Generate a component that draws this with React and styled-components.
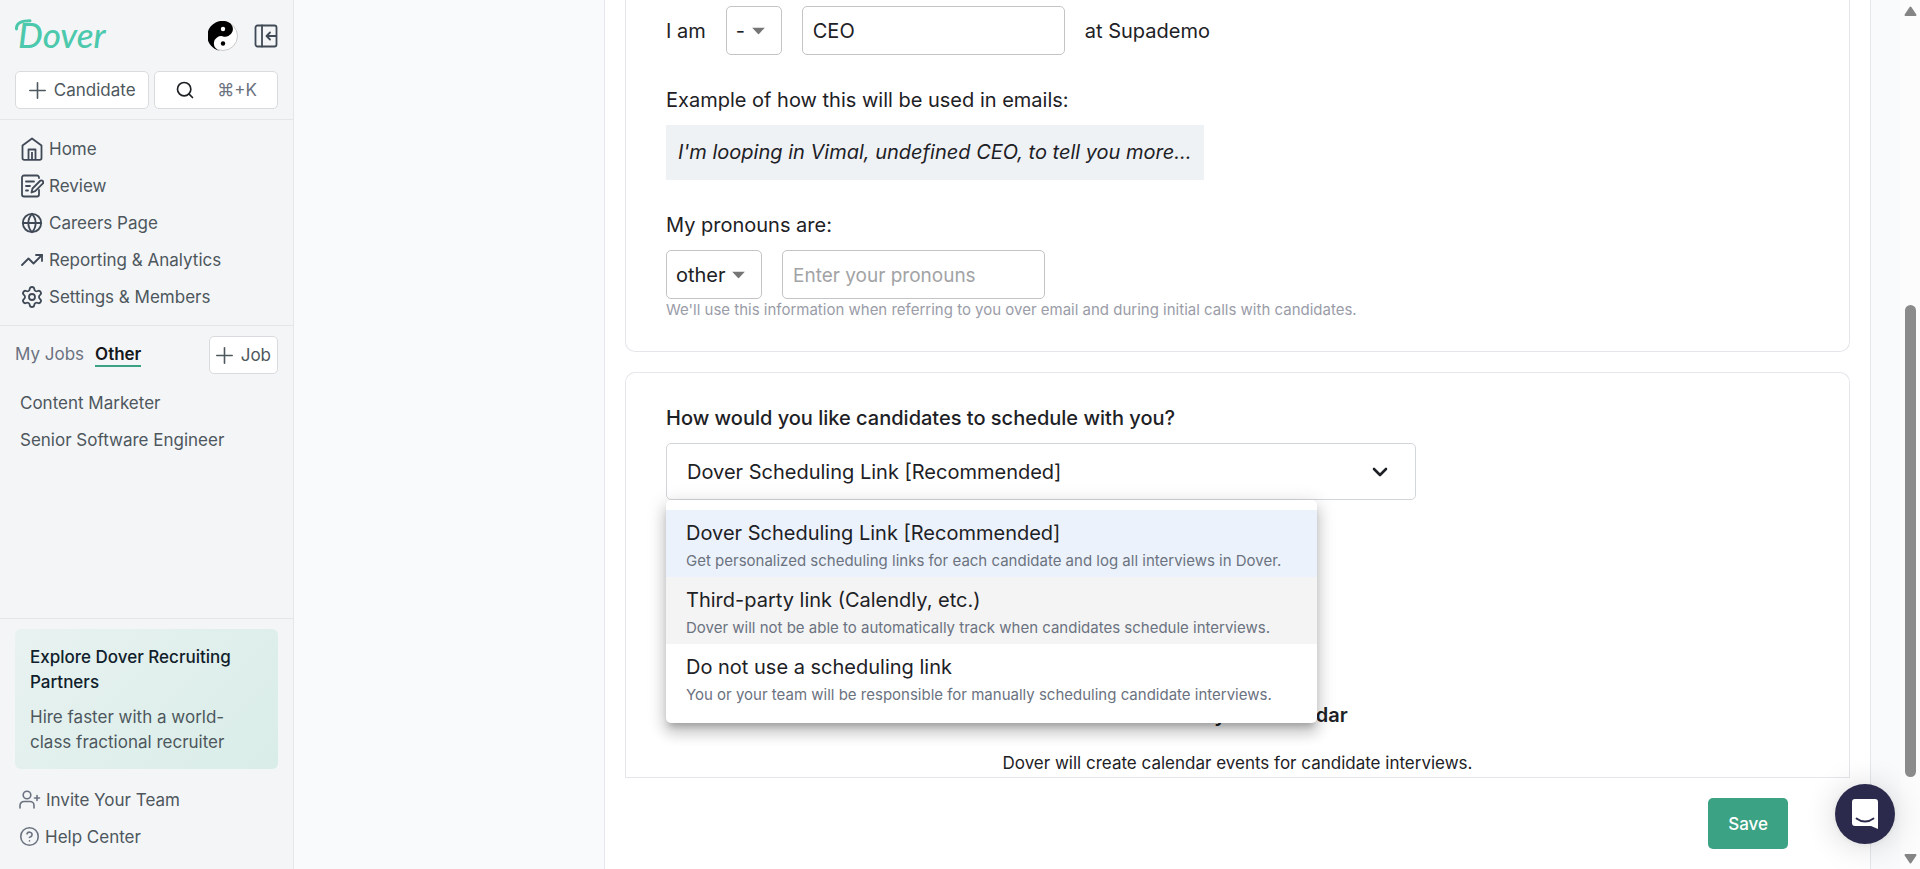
import React from "react";
import styled, { createGlobalStyle } from "styled-components";
import {
  ChevronDown,
  CircleHelp,
  Globe,
  Search,
  Settings,
  TrendingUp,
} from "lucide-react";

const colors = {
  sidebar: "#f4f5f7",
  page: "#f9fafc",
  line: "#e4e6ea",
  text: "#1d2125",
  nav: "#4d575d",
  icon: "#404a56",
  muted: "#6b7280",
  hint: "#9a9ca8",
  green: "#3ba283",
  logo: "#4cc9ac",
};

const GlobalStyle = createGlobalStyle`
  * {
    box-sizing: border-box;
  }
  body {
    margin: 0;
    font-family: Inter, sans-serif;
    font-size: 17px;
    color: ${colors.text};
    background: ${colors.page};
  }
  button, input, select {
    font: inherit;
    color: inherit;
  }
  a {
    color: inherit;
    text-decoration: none;
  }
`;

const Shell = styled.div`
  display: flex;
  height: 100vh;
  overflow: hidden;
`;

/* sidebar */

const Sidebar = styled.aside`
  flex: 0 0 294px;
  display: flex;
  flex-direction: column;
  background: ${colors.sidebar};
  border-right: 1px solid ${colors.line};
  color: ${colors.nav};
`;

const SidebarTop = styled.header`
  display: flex;
  flex-direction: column;
  gap: 16px;
  padding: 16px 15px 10px;
  border-bottom: 1px solid ${colors.line};
`;

const BrandRow = styled.div`
  display: flex;
  align-items: center;
  gap: 16px;
  height: 39px;
`;

const Brand = styled.a`
  margin-right: auto;
  line-height: 0;
`;

const IconButton = styled.button`
  display: flex;
  padding: 0;
  border: none;
  background: none;
  color: ${colors.icon};
  cursor: pointer;
`;

const ButtonRow = styled.div`
  display: flex;
  gap: 5px;
`;

const WhiteButton = styled.button`
  display: flex;
  align-items: center;
  justify-content: center;
  flex: ${(props) => props.$grow ?? "none"};
  gap: ${(props) => (props.$wide ? "22px" : "8px")};
  height: 38px;
  padding: 0 6px;
  background: #fff;
  border: 1px solid #d9dbde;
  border-radius: 5px;
  white-space: nowrap;
  cursor: pointer;
`;

const Shortcut = styled.span`
  color: ${colors.muted};
`;

const Nav = styled.nav`
  display: flex;
  flex-direction: column;
  padding: ${(props) => (props.$tight ? "12px 19px 14px" : "10px 20px")};
  ${(props) => props.$divider && `border-bottom: 1px solid ${colors.line};`}
`;

const NavLink = styled.a`
  display: flex;
  align-items: center;
  gap: 5px;
  height: 37px;

  & svg {
    flex: none;
    color: ${(props) => (props.$soft ? colors.muted : colors.icon)};
  }
`;

const IconSlot = styled.span`
  display: flex;
  justify-content: center;
  width: 24px;
`;

const JobsHeader = styled.div`
  display: flex;
  align-items: center;
  gap: 11px;
  padding: 10px 15px 0;
`;

const JobTab = styled.a`
  line-height: 22px;
  color: ${(props) => (props.$active ? "#14181b" : colors.muted)};
  font-weight: ${(props) => (props.$active ? 600 : 400)};
  border-bottom: 2px solid
    ${(props) => (props.$active ? colors.green : "transparent")};
`;

const Push = styled.div`
  margin-left: auto;
`;

const SidebarBottom = styled.div`
  margin-top: auto;
  padding-top: 10px;
  border-top: 1px solid ${colors.line};
`;

const Promo = styled.a`
  display: block;
  margin: 0 15px;
  padding: 16px 15px 14px;
  border-radius: 6px;
  background: linear-gradient(135deg, #e8f2f1, #d9ede8);
  line-height: 25px;
`;

const PromoTitle = styled.div`
  margin-bottom: 10px;
  font-weight: 500;
  color: #10202b;
`;

/* main area */

const Main = styled.main`
  flex: 1;
  display: flex;
  min-width: 0;
  padding: 0 29px 0 310px;
`;

const Panel = styled.section`
  flex: 1;
  display: flex;
  flex-direction: column;
  min-width: 0;
  background: #fff;
  border: solid ${colors.line};
  border-width: 0 1px;
`;

const ScrollArea = styled.div`
  flex: 1;
  display: flex;
  flex-direction: column;
  gap: 20px;
  min-height: 0;
  margin: 0 20px;
  overflow: hidden;
  border-bottom: 1px solid ${colors.line};
`;

const Card = styled.div`
  flex: ${(props) => (props.$last ? "1 0 auto" : "none")};
  padding: ${(props) => (props.$last ? "32px 40px 0" : "6px 40px 30px")};
  border: 1px solid ${colors.line};
  border-top-width: ${(props) => (props.$last ? "1px" : "0")};
  border-bottom-width: ${(props) => (props.$last ? "0" : "1px")};
  border-radius: ${(props) => (props.$last ? "10px 10px 0 0" : "0 0 10px 10px")};
  font-size: 20px;
`;

const FieldRow = styled.div`
  display: flex;
  align-items: center;
  gap: 20px;
`;

const Label = styled.label`
  display: block;
  line-height: 26px;
  font-weight: ${(props) => (props.$strong ? 500 : 400)};
  margin: ${(props) => props.$margin ?? "0"};
`;

const TextInput = styled.input`
  width: 263px;
  height: 49px;
  padding: 0 10px;
  border: 1px solid #c3c4c6;
  border-radius: 5px;
  background: #fff;
  outline: none;

  &::placeholder {
    font-size: 19px;
    color: #a2a3a5;
  }
`;

const SelectWrap = styled.div`
  position: relative;
  width: ${(props) => props.$width};
  max-width: 100%;

  & > svg {
    position: absolute;
    top: 50%;
    right: ${(props) => props.$iconRight ?? "17px"};
    transform: translateY(-50%);
    pointer-events: none;
  }
`;

const Select = styled.select`
  display: block;
  width: 100%;
  height: ${(props) => (props.$large ? "57px" : "49px")};
  padding: 0 ${(props) => (props.$large ? "20px" : "9px")};
  border: 1px solid ${(props) => (props.$large ? "#d3d6d9" : "#c3c4c6")};
  border-radius: 5px;
  background: #fff;
  appearance: none;
  outline: none;
`;

const Example = styled.p`
  width: fit-content;
  margin: 12px 0 0;
  padding: 14px 12px 15px;
  background: #eff2f5;
  line-height: 26px;
  font-style: italic;
`;

const Hint = styled.p`
  margin: 0;
  font-size: 15px;
  line-height: 22px;
  color: ${colors.hint};
`;

const Menu = styled.ul`
  position: absolute;
  z-index: 2;
  top: 100%;
  left: 0;
  min-width: 651px;
  margin: 0;
  padding: 10px 0 12px;
  list-style: none;
  background: #fff;
  border-radius: 5px;
  box-shadow: 0 6px 6px -3px rgba(0, 0, 0, 0.2),
    0 10px 14px 1px rgba(0, 0, 0, 0.14), 0 4px 18px 3px rgba(0, 0, 0, 0.12);
`;

const Option = styled.li`
  padding: 9px 20px 3px;
  white-space: nowrap;
  line-height: 28px;
  background: ${(props) => props.$background ?? "transparent"};
`;

const OptionNote = styled.div`
  font-size: 15px;
  line-height: 27px;
  color: ${colors.muted};
`;

const Calendar = styled.div`
  margin-top: 202px;
  text-align: center;
  font-size: 17px;
  line-height: 26px;
`;

const CalendarTitle = styled.h3`
  margin: 0 0 22px;
  font-size: 20px;
  font-weight: 600;
`;

const Footer = styled.footer`
  display: flex;
  justify-content: flex-end;
  padding: 20px 82px;
`;

const SaveButton = styled.button`
  height: 51px;
  padding: 0 20px;
  border: none;
  border-radius: 5px;
  background: ${colors.green};
  color: #fff;
  font-weight: 500;
  cursor: pointer;
`;

const ScrollTrack = styled.div`
  flex: 0 0 20px;
  display: flex;
  flex-direction: column;
  align-items: center;
  justify-content: space-between;
  padding: 6px 0 5px;
  background: #fcfcfc;
`;

const ScrollRail = styled.div`
  flex: 1;
  display: flex;
  flex-direction: column;
  justify-content: flex-end;
  padding-bottom: 77px;
`;

const ScrollThumb = styled.div`
  width: 11px;
  height: 62%;
  border-radius: 6px;
  background: #8b8b8b;
`;

const ChatButton = styled.button`
  position: fixed;
  right: 25px;
  bottom: 25px;
  z-index: 3;
  display: flex;
  align-items: center;
  justify-content: center;
  width: 60px;
  height: 60px;
  padding: 0;
  border: none;
  border-radius: 50%;
  background: #2b2a4c;
  box-shadow: 0 1px 6px rgba(0, 0, 0, 0.06), 0 2px 32px rgba(0, 0, 0, 0.16);
  cursor: pointer;
`;

const LogoText = styled.text`
  font-family: Lato, sans-serif;
  font-size: 35px;
  font-style: italic;
  font-weight: 500;
  fill: ${colors.logo};
`;

const Logo = () => (
  <svg width="104" height="50" viewBox="0 0 104 50" aria-hidden="true">
    <path
      d="M1.500 18C1 11 8 9.800 15 9.800"
      fill="none"
      stroke={colors.logo}
      strokeWidth="3"
      strokeLinecap="round"
    />
    <LogoText x="3" y="37">
      Dover
    </LogoText>
  </svg>
);

const YinYang = () => (
  <svg width="30" height="30" viewBox="0 0 30 30">
    <circle cx="15" cy="15" r="14.5" fill="#fff" stroke="#c9cacc" />
    <path
      d="M20 1A15 15 0 1 0 12 29.700A7.300 7.300 0 0 1 14.500 15.200A7.300 7.300 0 0 0 20 1Z"
      fill="#000"
    />
    <circle cx="15" cy="8" r="2.200" fill="#fff" />
    <circle cx="15" cy="22.500" r="2.200" fill="#000" />
  </svg>
);

const CollapseIcon = () => (
  <svg
    width="24"
    height="24"
    viewBox="0 0 24 24"
    fill="none"
    stroke="currentColor"
    strokeWidth="1.8"
    strokeLinecap="round"
    strokeLinejoin="round"
  >
    <rect x="1.500" y="1.500" width="21" height="21" rx="2" />
    <path d="M8 1.500v21M22 12h-9M16 8.500 12.500 12l3.500 3.500" />
  </svg>
);

const PlusIcon = () => (
  <svg
    width="17"
    height="17"
    viewBox="0 0 17 17"
    fill="none"
    stroke="currentColor"
    strokeWidth="1.600"
    strokeLinecap="round"
  >
    <path d="M8.500 .8v15.400M.8 8.500h15.400" />
  </svg>
);

const HomeIcon = () => (
  <svg
    width="24"
    height="24"
    viewBox="0 0 24 24"
    fill="none"
    stroke="currentColor"
    strokeWidth="1.800"
    strokeLinejoin="round"
  >
    <path d="M2.500 8.500 12 1.500l9.500 7V21a1.800 1.800 0 0 1-1.800 1.800H4.300A1.800 1.800 0 0 1 2.500 21Z" />
    <path d="M8.500 22.500V12.500h7v10M12 15v7" />
  </svg>
);

const ReviewIcon = () => (
  <svg
    width="24"
    height="24"
    viewBox="0 0 24 24"
    fill="none"
    stroke="currentColor"
    strokeWidth="1.800"
    strokeLinecap="round"
    strokeLinejoin="round"
  >
    <path d="M19 4V3.500A2 2 0 0 0 17 1.500H4a2 2 0 0 0-2 2v17a2 2 0 0 0 2 2h13a2 2 0 0 0 2-2V16" />
    <path d="M6 7.500h8M6 12h4M6 16.500h2" />
    <path d="m11.500 18.500 1-4L20 7a1.800 1.800 0 0 1 2.700 2.700l-7.500 7.500Z" />
  </svg>
);

const InviteIcon = () => (
  <svg
    width="22"
    height="20"
    viewBox="0 0 22 20"
    fill="none"
    stroke="currentColor"
    strokeWidth="1.600"
    strokeLinecap="round"
  >
    <circle cx="8" cy="5" r="3.800" />
    <path d="M1 18v-2.500a4 4 0 0 1 4-4h6a4 4 0 0 1 4 4V18M18 5.500v5M15.500 8h5" />
  </svg>
);

const Caret = () => (
  <svg width="13" height="7" viewBox="0 0 13 7">
    <path d="M0 0h13L6.500 7Z" fill="#757575" />
  </svg>
);

const ScrollArrow = ({ down }) => (
  <svg width="13" height="10" viewBox="0 0 13 10">
    <path
      d={down ? "M1.500 1h10L6.500 8.500Z" : "M1.500 9h10L6.500 1.500Z"}
      fill="#858585"
      stroke="#858585"
      strokeWidth="2"
      strokeLinejoin="round"
    />
  </svg>
);

const ChatIcon = () => (
  <svg width="28" height="32" viewBox="0 0 28 32">
    <path
      d="M4 1h20a3 3 0 0 1 3 3v27l-7-3H4a3 3 0 0 1-3-3V4a3 3 0 0 1 3-3Z"
      fill="#fff"
    />
    <path
      d="M5.500 20.500c5 4 12 4 17 0"
      fill="none"
      stroke="#2b2a4c"
      strokeWidth="1.800"
      strokeLinecap="round"
    />
  </svg>
);

const navItems = [
  { label: "Home", icon: <HomeIcon /> },
  { label: "Review", icon: <ReviewIcon /> },
  { label: "Careers Page", icon: <Globe size={22} strokeWidth={2} /> },
  {
    label: "Reporting & Analytics",
    icon: <TrendingUp size={24} strokeWidth={1.8} />,
  },
  {
    label: "Settings & Members",
    icon: <Settings size={24} strokeWidth={1.8} />,
  },
];

const jobs = ["Content Marketer", "Senior Software Engineer"];

const schedulingOptions = [
  {
    title: "Dover Scheduling Link [Recommended]",
    note: "Get personalized scheduling links for each candidate and log all interviews in Dover.",
    background: "#ecf2fb",
  },
  {
    title: "Third-party link (Calendly, etc.)",
    note: "Dover will not be able to automatically track when candidates schedule interviews.",
    background: "#f4f4f4",
  },
  {
    title: "Do not use a scheduling link",
    note: "You or your team will be responsible for manually scheduling candidate interviews.",
  },
];

const AppSidebar = () => (
  <Sidebar>
    <SidebarTop>
      <BrandRow>
        <Brand href="#" aria-label="Dover">
          <Logo />
        </Brand>
        <IconButton type="button" aria-label="Account">
          <YinYang />
        </IconButton>
        <IconButton type="button" aria-label="Collapse sidebar">
          <CollapseIcon />
        </IconButton>
      </BrandRow>
      <ButtonRow>
        <WhiteButton type="button" $grow="135 1 0">
          <PlusIcon />
          Candidate
        </WhiteButton>
        <WhiteButton type="button" aria-label="Search" $grow="123 1 0" $wide>
          <Search size={20} strokeWidth={2} color="#1d2125" />
          <Shortcut>⌘+K</Shortcut>
        </WhiteButton>
      </ButtonRow>
    </SidebarTop>
    <Nav $divider>
      {navItems.map(({ label, icon }) => (
        <NavLink href="#" key={label}>
          <IconSlot>{icon}</IconSlot>
          {label}
        </NavLink>
      ))}
    </Nav>
    <JobsHeader>
      <JobTab href="#">My Jobs</JobTab>
      <JobTab href="#" $active>
        Other
      </JobTab>
      <Push>
        <WhiteButton type="button">
          <PlusIcon />
          Job
        </WhiteButton>
      </Push>
    </JobsHeader>
    <Nav>
      {jobs.map((job) => (
        <NavLink href="#" key={job}>
          {job}
        </NavLink>
      ))}
    </Nav>
    <SidebarBottom>
      <Promo href="#">
        <PromoTitle>Explore Dover Recruiting Partners</PromoTitle>
        Hire faster with a world-class fractional recruiter
      </Promo>
      <Nav $tight>
        <NavLink href="#" $soft>
          <InviteIcon />
          Invite Your Team
        </NavLink>
        <NavLink href="#" $soft>
          <CircleHelp size={21} strokeWidth={1.8} />
          Help Center
        </NavLink>
      </Nav>
    </SidebarBottom>
  </Sidebar>
);

const App = () => (
  <>
    <GlobalStyle />
    <Shell>
      <AppSidebar />
      <Main>
        <Panel>
          <ScrollArea>
            <Card>
              <FieldRow>
                <Label htmlFor="article">I am</Label>
                <SelectWrap $width="56px">
                  <Select id="article" defaultValue="-">
                    <option>-</option>
                    <option>a</option>
                    <option>the</option>
                  </Select>
                  <Caret />
                </SelectWrap>
                <TextInput aria-label="Job title" defaultValue="CEO" />
                <span>at Supademo</span>
              </FieldRow>
              <Label as="div" $margin="32px 0 0">
                Example of how this will be used in emails:
              </Label>
              <Example>
                I'm looping in Vimal, undefined CEO, to tell you more...
              </Example>
              <Label htmlFor="pronouns" $margin="32px 0 12px">
                My pronouns are:
              </Label>
              <FieldRow>
                <SelectWrap $width="96px">
                  <Select id="pronouns" defaultValue="other">
                    <option>other</option>
                    <option>she</option>
                    <option>he</option>
                  </Select>
                  <Caret />
                </SelectWrap>
                <TextInput
                  aria-label="Pronouns"
                  placeholder="Enter your pronouns"
                />
              </FieldRow>
              <Hint>
                We'll use this information when referring to you over email and
                during initial calls with candidates.
              </Hint>
            </Card>
            <Card $last>
              <Label htmlFor="scheduling" $strong $margin="0 0 12px">
                How would you like candidates to schedule with you?
              </Label>
              <SelectWrap $width="750px" $iconRight="24px">
                <Select id="scheduling" $large>
                  {schedulingOptions.map(({ title }) => (
                    <option key={title}>{title}</option>
                  ))}
                </Select>
                <ChevronDown size={24} strokeWidth={2.6} />
                <Menu role="listbox" aria-label="Scheduling options">
                  {schedulingOptions.map(({ title, note, background }, i) => (
                    <Option
                      key={title}
                      role="option"
                      aria-selected={i === 0}
                      $background={background}
                    >
                      {title}
                      <OptionNote>{note}</OptionNote>
                    </Option>
                  ))}
                </Menu>
              </SelectWrap>
              <Calendar>
                <CalendarTitle>Connect your calendar</CalendarTitle>
                Dover will create calendar events for candidate interviews.
              </Calendar>
            </Card>
          </ScrollArea>
          <Footer>
            <SaveButton type="button">Save</SaveButton>
          </Footer>
        </Panel>
      </Main>
      <ScrollTrack>
        <ScrollArrow />
        <ScrollRail>
          <ScrollThumb />
        </ScrollRail>
        <ScrollArrow down />
      </ScrollTrack>
      <ChatButton type="button" aria-label="Open chat">
        <ChatIcon />
      </ChatButton>
    </Shell>
  </>
);

export default App;
